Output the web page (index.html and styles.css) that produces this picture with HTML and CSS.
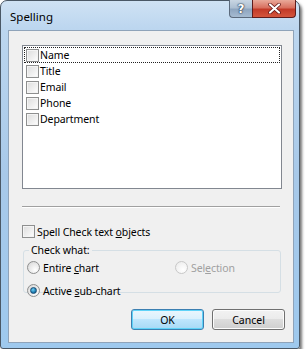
FILE: index.html
```html
<!DOCTYPE html>
<html lang="en">
<head>
    <meta charset="UTF-8">
    <title>Spelling</title>
    <link rel="stylesheet" href="styles.css">
</head>
<body>
    <div class="window">
        <div class="titlebar">
            <span class="title">Spelling</span>
            <div class="caption-buttons">
                <div class="cap-btn help">?</div>
                <div class="cap-btn close">
                    <svg width="13" height="11" viewBox="0 0 13 11">
                        <path d="M2 1.5 L11 9.5 M11 1.5 L2 9.5" stroke="#5a1010" stroke-width="3.6" stroke-linecap="round"/>
                        <path d="M2 1.5 L11 9.5 M11 1.5 L2 9.5" stroke="#ffffff" stroke-width="2.2" stroke-linecap="round"/>
                    </svg>
                </div>
            </div>
        </div>

        <div class="client">
            <div class="listbox">
                <div class="item focused"><span class="check"></span><span>Name</span></div>
                <div class="item"><span class="check"></span><span>Title</span></div>
                <div class="item"><span class="check"></span><span>Email</span></div>
                <div class="item"><span class="check"></span><span>Phone</span></div>
                <div class="item"><span class="check"></span><span>Department</span></div>
            </div>

            <div class="separator"></div>

            <div class="check-row"><span class="check"></span><span>Spell Check text <u>o</u>bjects</span></div>

            <fieldset class="group">
                <legend>Check what:</legend>
                <div class="radio-grid">
                    <div class="radio-row"><span class="radio"></span><span>Entire <u>c</u>hart</span></div>
                    <div class="radio-row disabled"><span class="radio"></span><span>Sel<u>e</u>ction</span></div>
                    <div class="radio-row"><span class="radio checked"></span><span>Active <u>s</u>ub-chart</span></div>
                </div>
            </fieldset>

            <div class="buttons">
                <button class="btn default">OK</button>
                <button class="btn">Cancel</button>
            </div>
        </div>
    </div>
</body>
</html>
```

FILE: styles.css
```css
body {
    margin: 0;
    background-color: #ffffff;
    font-family: "Noto Sans", "Open Sans", sans-serif;
    font-size: 10.5px;
    letter-spacing: -0.1px;
    color: #000000;
}

/* Jendela Vista */
.window {
    width: 300px;
    height: 349px;
    box-sizing: border-box;
    border: 1px solid #4a5866;
    border-radius: 7px 7px 3px 3px;
    background: linear-gradient(180deg, #cfe2f4 0%, #bcd6ef 8%, #a8c9e9 50%, #9ec9ee 100%);
    box-shadow: 2px 3px 3px rgba(0, 0, 0, 0.55);
    display: flex;
    flex-direction: column;
    padding: 0 5px 5px 7px;
}

.titlebar {
    height: 29px;
    display: flex;
    justify-content: space-between;
    align-items: flex-start;
}

.title {
    font-size: 11.5px;
    letter-spacing: 0;
    margin: 8px 0 0 2px;
    color: #000;
}

.caption-buttons {
    display: flex;
    margin-right: -2px;
    margin-top: -1px;
}

.cap-btn {
    height: 18px;
    box-sizing: border-box;
    border: 1px solid #5b6a7c;
    border-top: none;
    display: flex;
    justify-content: center;
    align-items: center;
}

.help {
    width: 23px;
    border-radius: 0 0 0 4px;
    border-right: none;
    background: linear-gradient(180deg, #c9d6e3 0%, #adbfd2 45%, #8ea5bf 55%, #a6bbd1 100%);
    color: #ffffff;
    font-family: "DejaVu Sans", sans-serif;
    font-weight: bold;
    font-size: 12px;
    text-shadow: 0 0 1px #24354d, 0 0 1px #24354d, 0 0 2px #24354d;
}

.close {
    width: 44px;
    border-radius: 0 0 4px 0;
    border-color: #5e1c1c;
    background: linear-gradient(180deg, #e9a99a 0%, #d8705f 45%, #c23a28 55%, #d4553d 100%);
}

/* Area klien */
.client {
    flex: 1;
    background-color: #f0f0f0;
    border: 1px solid #8fa3b9;
    display: flex;
    flex-direction: column;
    padding: 14px 0 0 13px;
}

.listbox {
    width: 260px;
    height: 144px;
    box-sizing: border-box;
    border: 1px solid #828790;
    background-color: #ffffff;
    padding: 1px;
}

.item {
    height: 16px;
    box-sizing: border-box;
    display: flex;
    align-items: center;
    padding-left: 2px;
    gap: 1px;
}

.item.focused {
    border: 1px dotted #222;
    padding-left: 1px;
}

.check {
    width: 11px;
    height: 11px;
    border: 1px solid #8e8f8f;
    background: linear-gradient(135deg, #dcdcdc 0%, #f0f0f0 60%, #ffffff 100%);
    box-shadow: inset 0 0 0 1px #f4f4f4;
    flex-shrink: 0;
}

.separator {
    width: 258px;
    height: 0;
    border-top: 1px solid #a0a0a0;
    border-bottom: 1px solid #ffffff;
    margin-top: 17px;
}

.check-row {
    display: flex;
    align-items: center;
    gap: 2px;
    margin-top: 17px;
    height: 13px;
}

.group {
    margin: 7px 0 0 1px;
    width: 258px;
    height: 48px;
    box-sizing: border-box;
    border: 1px solid #d5dfe5;
    border-radius: 3px;
    padding: 0 0 0 3px;
}

.group legend {
    padding: 0 2px;
    margin-left: 2px;
    line-height: 10px;
}

.radio-grid {
    display: grid;
    grid-template-columns: 148px 1fr;
    row-gap: 10px;
    margin-top: 6px;
}

.radio-row {
    display: flex;
    align-items: center;
    gap: 3px;
    height: 13px;
}

.radio-row.disabled {
    color: #a0a0a0;
}

.radio {
    width: 11px;
    height: 11px;
    border-radius: 50%;
    border: 1px solid #8e8f8f;
    background: radial-gradient(circle at 65% 70%, #ffffff 0%, #e6e6e6 60%, #cfcfcf 100%);
    flex-shrink: 0;
    display: flex;
    justify-content: center;
    align-items: center;
}

.radio-row.disabled .radio {
    border-color: #c8c8c8;
    background: radial-gradient(circle at 65% 70%, #ffffff 0%, #f0f0f0 70%, #e2e2e2 100%);
}

.radio.checked::after {
    content: "";
    width: 5px;
    height: 5px;
    border-radius: 50%;
    background: radial-gradient(circle at 40% 35%, #6fd0f5 0%, #1c7bb0 60%, #0f4d76 100%);
    border: 1px solid #1b4c73;
}

.buttons {
    display: flex;
    gap: 8px;
    margin: 16px 0 0 109px;
}

.btn {
    width: 73px;
    height: 21px;
    box-sizing: border-box;
    border: 1px solid #707070;
    border-radius: 3px;
    background: linear-gradient(180deg, #f2f2f2 0%, #ebebeb 49%, #dddddd 50%, #cfcfcf 100%);
    box-shadow: inset 0 0 0 1px #fcfcfc;
    font-family: "Noto Sans", "Open Sans", sans-serif;
    font-size: 10.5px;
    color: #000;
    padding: 0;
}

.btn.default {
    border-color: #3c7fb1;
    background: linear-gradient(180deg, #eaf6fd 0%, #d9f0fc 49%, #bee6fd 50%, #a7d9f5 100%);
    box-shadow: inset 0 0 0 1px #5fd3f8;
}
```
